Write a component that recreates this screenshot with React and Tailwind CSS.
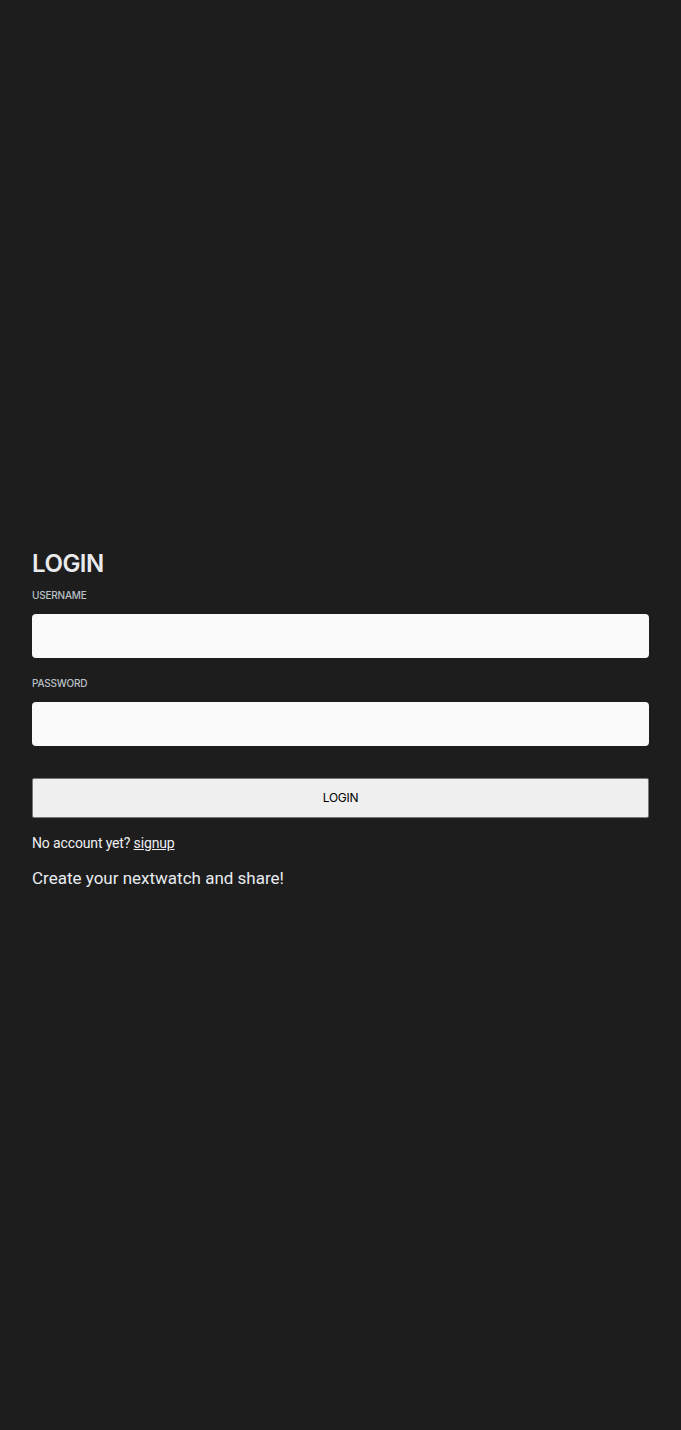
import React, { useState } from 'react';

const LoginPage = () => {
    const [username, setUsername] = useState('');
    const [password, setPassword] = useState('');

    return (
        <div className="min-h-screen bg-[#1d1d1d] flex items-center px-8 font-['Inter','Liberation_Sans',sans-serif]">
            <div className="w-full pt-[8px] pb-0">
                <h2 className="text-[24px] leading-[32px] font-semibold text-[#e8eaec] tracking-[-0.02em]">LOGIN</h2>

                <form onSubmit={(e) => e.preventDefault()} className="mt-2">
                    <label className="block text-[10px] leading-[14px] font-medium text-[#b9c0c8] uppercase tracking-[-0.02em]">Username</label>
                    <input
                        type="text"
                        className="mt-[12px] block w-full h-[44px] bg-[#fafafa] rounded-[4px] px-3 text-black focus:outline-none"
                        value={username}
                        onChange={(e) => setUsername(e.target.value)}
                    />

                    <label className="block mt-[18px] text-[10px] leading-[14px] font-medium text-[#b9c0c8] uppercase tracking-[-0.02em]">Password</label>
                    <input
                        type="password"
                        className="mt-[12px] block w-full h-[44px] bg-[#fafafa] rounded-[4px] px-3 text-black focus:outline-none"
                        value={password}
                        onChange={(e) => setPassword(e.target.value)}
                    />

                    <button
                        type="submit"
                        className="mt-[32px] block w-full h-[40px] bg-[#efefef] border border-[#767676] rounded-[2px] text-[12px] text-black tracking-[-0.02em]"
                    >
                        LOGIN
                    </button>
                </form>

                <p className="mt-[15px] text-[14px] leading-[20px] text-[#eef0f2] font-['Roboto',sans-serif] tracking-[-0.01em]">
                    No account yet? <a href="#" className="underline">signup</a>
                </p>
                <p className="mt-[13px] text-[17px] leading-[24px] text-[#e8ecef] font-['Roboto',sans-serif]">Create your nextwatch and share!</p>
            </div>
        </div>
    );
};

export default LoginPage;
